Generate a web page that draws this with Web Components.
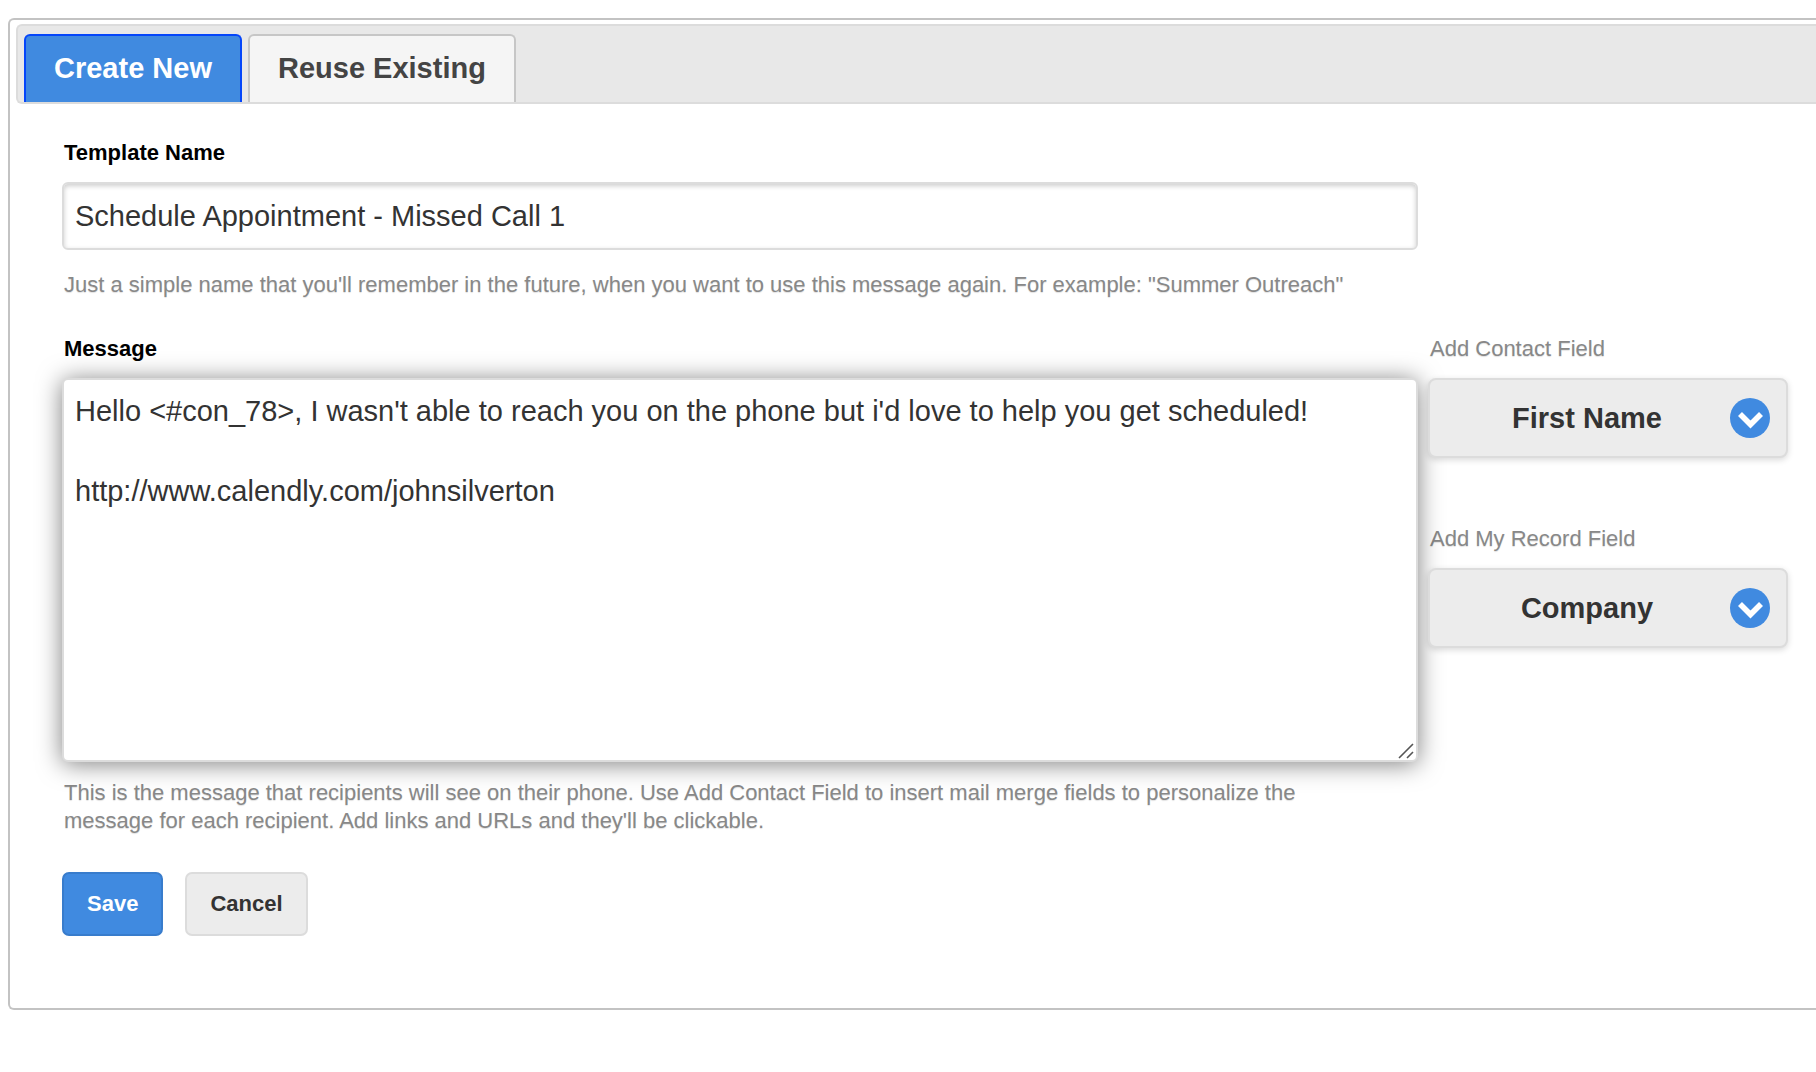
<!DOCTYPE html>
<html lang="en">
<head>
<meta charset="utf-8">
<title>Message Template</title>
<style>
  body {
    margin: 0;
    padding: 18px 0 0 8px;
    background: #fff;
    color: #333;
    font-family: "Liberation Sans", Arial, sans-serif;
    overflow-x: hidden;
  }
</style>
</head>
<body>
<template-panel>
  <tab-strip slot="tabs">
    <tab-item selected>Create New</tab-item>
    <tab-item>Reuse Existing</tab-item>
  </tab-strip>
  <template-form></template-form>
</template-panel>

<script>
const define = (name, html, setup) => {
  const template = document.createElement('template');
  template.innerHTML = '<style>*{box-sizing:border-box}</style>' + html;
  customElements.define(name, class extends HTMLElement {
    constructor() {
      super();
      this.attachShadow({ mode: 'open' }).append(template.content.cloneNode(true));
    }
    connectedCallback() {
      if (setup) setup(this, this.shadowRoot);
    }
  });
};

define('template-panel', `
  <style>
    :host { display: block; }
    section {
      border: 2px solid #c3c3c3;
      border-right: 0;
      border-radius: 6px 0 0 6px;
      padding: 4px 0 72px 6px;
    }
  </style>
  <section><slot name="tabs"></slot><slot></slot></section>
`);

define('tab-strip', `
  <style>
    :host { display: block; }
    nav {
      display: flex;
      gap: 6px;
      padding: 8px 6px 0;
      background: #e8e8e8;
      border: 2px solid #dcdcdc;
      border-right: 0;
      border-radius: 6px 0 0 6px;
    }
  </style>
  <nav role="tablist"><slot></slot></nav>
`);

define('tab-item', `
  <style>
    :host { display: block; }
    button {
      display: block;
      height: 68px;
      padding: 0 28px 2px;
      font: bold 29px/62px "Liberation Sans", Arial, sans-serif;
      color: #444;
      background: #f5f5f5;
      border: 2px solid #c6c6c6;
      border-bottom: 0;
      border-radius: 6px 6px 0 0;
      cursor: pointer;
    }
    :host([selected]) button { color: #fff; background: #408ae0; border-color: #0546fa; }
  </style>
  <button type="button" role="tab"><slot></slot></button>
`, (host, root) => {
  root.querySelector('button').setAttribute('aria-selected', host.hasAttribute('selected'));
});

define('text-field', `
  <style>
    :host { display: block; }
    label {
      display: block;
      margin: 0 2px 14px;
      font: bold 22px/30px "Liberation Sans", Arial, sans-serif;
      color: #000;
    }
    input, textarea {
      display: block;
      width: 100%;
      margin: 0;
      padding: 11px;
      font: 29px/40px "Liberation Sans", Arial, sans-serif;
      color: #333;
      background: #fff;
      border: 2px solid #dcdcdc;
      border-radius: 6px;
      outline: none;
    }
    input { height: 68px; box-shadow: inset 0 2px 5px rgba(0,0,0,.2); }
    .area { position: relative; }
    textarea { height: 384px; resize: none; box-shadow: 0 2px 24px rgba(0,0,0,.5); }
    svg { position: absolute; right: 4px; bottom: 3px; }
    p {
      margin: 21px 32px 0 2px;
      font-size: 22px;
      line-height: 28px;
      color: #888;
      text-shadow: 0 1px 1px rgba(0,0,0,.12);
    }
    .area + p { margin-top: 17px; }
  </style>
  <label for="control"></label>
  <div class="box"></div>
  <p><slot></slot></p>
`, (host, root) => {
  root.querySelector('label').textContent = host.getAttribute('label');
  const box = root.querySelector('.box');
  const multiline = host.hasAttribute('multiline');
  const control = document.createElement(multiline ? 'textarea' : 'input');
  control.id = 'control';
  control.spellcheck = false;
  control.value = host.getAttribute('value');
  box.append(control);
  if (multiline) {
    box.classList.add('area');
    box.insertAdjacentHTML('beforeend',
      '<svg width="16" height="16" viewBox="0 0 16 16" fill="none" stroke="#555" stroke-width="1.6" aria-hidden="true"><path d="M1 15 15 1M9 15l6-6"/></svg>');
  }
});

define('field-picker', `
  <style>
    :host { display: block; }
    label {
      display: block;
      margin: 0 2px 14px;
      font-size: 22px;
      line-height: 30px;
      color: #888;
      text-shadow: 0 1px 1px rgba(0,0,0,.12);
    }
    .box { position: relative; }
    select {
      display: block;
      appearance: none;
      width: 100%;
      height: 80px;
      margin: 0;
      padding: 0 66px 0 24px;
      font: bold 29px/40px "Liberation Sans", Arial, sans-serif;
      color: #333;
      text-align: center;
      text-align-last: center;
      background: #ececec;
      border: 2px solid #dcdcdc;
      border-radius: 8px;
      box-shadow: 0 2px 6px rgba(0,0,0,.15);
    }
    svg { position: absolute; right: 18px; top: 20px; pointer-events: none; }
  </style>
  <label for="control"></label>
  <div class="box">
    <select id="control"><option></option></select>
    <svg width="40" height="40" viewBox="0 0 40 40" aria-hidden="true">
      <circle cx="20" cy="20" r="20" fill="#408ae0"/>
      <path d="M10 16 20.500 26.500 31 16" fill="none" stroke="#fff" stroke-width="5.600"/>
    </svg>
  </div>
`, (host, root) => {
  root.querySelector('label').textContent = host.getAttribute('label');
  root.querySelector('option').textContent = host.getAttribute('value');
});

define('action-button', `
  <style>
    :host { display: block; }
    button {
      display: block;
      height: 64px;
      padding: 0 23px;
      font: bold 22px/28px "Liberation Sans", Arial, sans-serif;
      color: #333;
      background: #ececec;
      border: 2px solid #dcdcdc;
      border-radius: 7px;
      cursor: pointer;
    }
    :host([primary]) button { color: #fff; background: #408ae0; border-color: #387ccc; }
  </style>
  <button type="button"><slot></slot></button>
`);

define('template-form', `
  <style>
    :host { display: block; }
    form {
      display: grid;
      grid-template-columns: minmax(0, 1fr) 360px;
      column-gap: 10px;
      row-gap: 35px;
      padding: 34px 28px 0 46px;
    }
    text-field { grid-column: 1; }
    .pickers { grid-column: 2; display: flex; flex-direction: column; gap: 66px; }
    .actions { grid-column: 1; display: flex; gap: 22px; padding-top: 2px; }
  </style>
  <form>
    <text-field label="Template Name" value="Schedule Appointment - Missed Call 1">Just a simple name that you'll remember in the future, when you want to use this message again. For example: "Summer Outreach"</text-field>
    <text-field multiline label="Message" value="Hello &lt;#con_78&gt;, I wasn't able to reach you on the phone but i'd love to help you get scheduled!&#10;&#10;http://www.calendly.com/johnsilverton">This is the message that recipients will see on their phone. Use Add Contact Field to insert mail merge fields to personalize the message for each recipient. Add links and URLs and they'll be clickable.</text-field>
    <div class="pickers">
      <field-picker label="Add Contact Field" value="First Name"></field-picker>
      <field-picker label="Add My Record Field" value="Company"></field-picker>
    </div>
    <div class="actions">
      <action-button primary>Save</action-button>
      <action-button>Cancel</action-button>
    </div>
  </form>
`);
</script>
</body>
</html>
